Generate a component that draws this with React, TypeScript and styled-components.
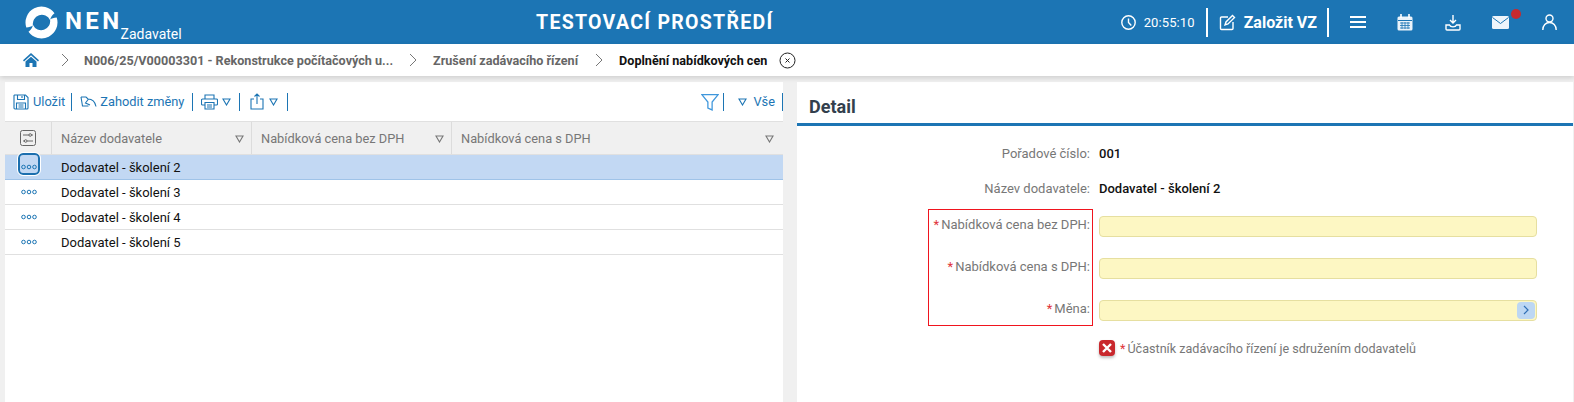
import React from "react";
import styled, { createGlobalStyle } from "styled-components";

const Global = createGlobalStyle`
  html, body { margin: 0; padding: 0; background: #f0f0f0; height: 100%; overflow: hidden; }
  body { font-family: Roboto, "Liberation Sans", sans-serif; }
  * { box-sizing: border-box; }
`;

const Page = styled.div`
  width: 1574px;
  height: 402px;
  display: flex;
  flex-direction: column;
  overflow: hidden;
  background: #f0f0f0;
`;

const Header = styled.header`
  height: 44px;
  flex: none;
  background: #1c75b4;
  color: #fff;
  display: flex;
  align-items: center;
  padding-left: 25px;
`;
const LogoBlock = styled.div`
  width: 511px;
  flex: none;
  display: flex;
  align-items: center;
  height: 44px;
`;
const NenText = styled.span`
  font-size: 24px;
  font-weight: 700;
  letter-spacing: 3.4px;
  margin-left: 7px;
  line-height: 24px;
  margin-top: -3px;
`;
const RoleText = styled.span`
  font-size: 14px;
  align-self: flex-end;
  line-height: 17px;
  margin: 0 0 1px -2px;
`;
const EnvTitle = styled.h1`
  margin: 0;
  width: 239px;
  flex: none;
  font-size: 19.5px;
  font-weight: 700;
  letter-spacing: 1.3px;
  white-space: nowrap;
`;
const HeaderRight = styled.div`
  margin-left: auto;
  display: flex;
  align-items: center;
  height: 44px;
  padding-right: 17px;
`;
const Clock = styled.span`
  font-size: 13px;
  margin: 0 11px 0 8px;
  letter-spacing: 0.1px;
`;
const HeaderDivider = styled.span`
  width: 2px;
  height: 29px;
  background: #fff;
`;
const CreateBtn = styled.span`
  display: flex;
  align-items: center;
  gap: 8px;
  font-size: 16px;
  font-weight: 700;
  padding: 0 10px 0 11px;
`;
const IconSlot = styled.span<{ $w: number; $ml: number }>`
  width: ${(p) => p.$w}px;
  margin-left: ${(p) => p.$ml}px;
  display: flex;
  position: relative;
  justify-content: center;
`;
const Dot = styled.span`
  position: absolute;
  width: 10px;
  height: 10px;
  border-radius: 50%;
  background: #c62a2f;
  right: -12px;
  top: -7px;
`;

const Crumbs = styled.nav`
  height: 32px;
  flex: none;
  background: #fff;
  display: flex;
  align-items: center;
  padding-left: 23px;
  box-shadow: 0 2px 5px rgba(0, 0, 0, 0.14);
  position: relative;
  z-index: 1;
  font-size: 12.6px;
  font-weight: 700;
`;
const Crumb = styled.span<{ $current?: boolean }>`
  color: ${(p) => (p.$current ? "#111" : "#666")};
  white-space: nowrap;
`;
const ChevronSlot = styled.span<{ $ml: number; $mr: number }>`
  margin: 0 ${(p) => p.$mr}px 0 ${(p) => p.$ml}px;
  display: flex;
`;

const Body = styled.main`
  flex: 1;
  display: flex;
  padding: 6px 1px 0 5px;
  gap: 14px;
  min-height: 0;
`;
const ListPanel = styled.section`
  width: 778px;
  flex: none;
  background: #fff;
`;
const DetailPanel = styled.section`
  flex: 1;
  background: #fff;
`;

const Toolbar = styled.div`
  height: 40px;
  display: flex;
  align-items: center;
  border-bottom: 1px solid #e0e0e0;
  padding-left: 8px;
  color: #1c75b4;
  font-size: 12.8px;
`;
const ToolDivider = styled.span<{ $ml?: number; $mr?: number }>`
  width: 1px;
  height: 18px;
  background: #1c75b4;
  margin: 0 ${(p) => p.$mr ?? 8}px 0 ${(p) => p.$ml ?? 7}px;
`;
const ToolButton = styled.span<{ $gap?: number }>`
  display: flex;
  align-items: center;
  gap: ${(p) => p.$gap ?? 4}px;
  white-space: nowrap;
`;
const ToolRight = styled.div`
  margin-left: auto;
  display: flex;
  align-items: center;
  height: 100%;
`;
const AllLabel = styled.span`
  margin: 0 7px 0 6px;
`;

const GridHead = styled.div`
  display: grid;
  grid-template-columns: 47px 200px 200px 1fr;
  height: 33px;
  background: #f0f0f0;
  border-bottom: 1px solid #e0e0e0;
  color: #777;
  font-size: 12.8px;
`;
const HeadCell = styled.div`
  display: flex;
  align-items: center;
  justify-content: space-between;
  padding: 1px 7px 0 9px;
  border-right: 1px solid #dcdcdc;
  &:last-child { border-right: none; padding-right: 9px; }
`;
const SettingsCell = styled(HeadCell)`
  justify-content: center;
  padding: 0;
`;
const Row = styled.div<{ $selected?: boolean }>`
  display: grid;
  grid-template-columns: 47px 1fr;
  height: 25px;
  align-items: center;
  font-size: 13px;
  color: #111;
  background: ${(p) => (p.$selected ? "#c2d8f3" : "#fff")};
  border-bottom: 1px solid ${(p) => (p.$selected ? "#9fc3e8" : "#e0e0e0")};
`;
const RowAction = styled.div`
  display: flex;
  justify-content: center;
  position: relative;
`;
const RowName = styled.div`
  padding: 1px 0 0 9px;
`;
const Focus = styled.span`
  position: absolute;
  top: -11px;
  left: 13px;
  width: 22px;
  height: 22px;
  border: 2px solid #1c6fae;
  border-radius: 5px;
  outline: 1px solid #fff;
`;

const DetailTitleBar = styled.div`
  height: 44px;
  border-bottom: 3px solid #1c75b4;
  padding: 14px 0 0 12px;
  font-size: 18px;
  line-height: 21px;
  font-weight: 700;
  color: #333f4d;
`;
const Form = styled.div`
  position: relative;
  display: grid;
  grid-template-columns: 294px 438px;
  column-gap: 8px;
  padding: 9px 0 0 0;
  font-size: 13px;
  color: #777;
`;
const Label = styled.div<{ $h: number }>`
  height: ${(p) => p.$h}px;
  display: flex;
  align-items: center;
  justify-content: flex-end;
  white-space: nowrap;
  padding: ${(p) => (p.$h === 42 ? "0 1px 3px 0" : "2px 1px 0 0")};
`;
const Star = styled.span`
  color: #e0343a;
  margin-right: 2px;
`;
const Value = styled.div<{ $h: number }>`
  height: ${(p) => p.$h}px;
  padding-top: 2px;
  display: flex;
  align-items: center;
  color: #111;
  font-weight: 500;
`;
const Field = styled.div`
  height: 42px;
  display: flex;
  align-items: center;
`;
const Input = styled.div`
  width: 100%;
  height: 21px;
  background: #fdf7c3;
  border: 1px solid #e6dfa0;
  border-radius: 4px;
  position: relative;
`;
const PickButton = styled.span`
  position: absolute;
  right: 1px;
  top: 1px;
  width: 18px;
  height: 17px;
  border-radius: 4px;
  background: #bdd7f3;
  display: flex;
  align-items: center;
  justify-content: center;
`;
const RedBox = styled.div`
  position: absolute;
  left: 131px;
  top: 83px;
  width: 165px;
  height: 117px;
  border: 1px solid #f0141e;
`;
const CheckRow = styled.div`
  grid-column: 2;
  display: flex;
  align-items: center;
  height: 34px;
  font-size: 12.6px;
  color: #777;
`;
const CheckBox = styled.span`
  width: 16px;
  height: 16px;
  border-radius: 4px;
  background: #c9282d;
  box-shadow: 0 2px 3px rgba(0, 0, 0, 0.25);
  display: flex;
  align-items: center;
  justify-content: center;
  margin-right: 5px;
`;

const stroke = { fill: "none", stroke: "currentColor", strokeWidth: 1.1 } as const;

const crescent =
  "M1.300 21.500A16 16 0 0 1 29.500 7.200C27.500 8.500 25.800 11 25 14A9 9 0 0 0 8 19.500C6.500 20.500 4 21.200 1.300 21.500Z";
const Logo = () => (
  <svg width="33" height="33" viewBox="0 0 33 33" fill="#fff">
    <path d={crescent} />
    <path d={crescent} transform="rotate(180 16.5 16.5)" />
  </svg>
);
const HIcon = ({ w, h, children }: { w: number; h: number; children: React.ReactNode }) => (
  <svg width={w} height={h} viewBox={`0 0 ${w} ${h}`} fill="none" stroke="#fff" strokeWidth="1.4">
    {children}
  </svg>
);
const Chevron = () => (
  <svg width="8" height="14" viewBox="0 0 8 14" fill="none" stroke="#777" strokeWidth="1">
    <path d="M1 1l6 6-6 6" />
  </svg>
);
const Tri = ({ color = "#1c75b4" }: { color?: string }) => (
  <svg width="9" height="8" viewBox="0 0 9 8" fill="none" stroke={color} strokeWidth="1.1">
    <path d="M1 1h7L4.500 7z" />
  </svg>
);
const Dots = () => (
  <svg width="16" height="6" viewBox="0 0 16 6" fill="none" stroke="#1c75b4" strokeWidth="1">
    <circle cx="2.500" cy="3" r="1.800" />
    <circle cx="8" cy="3" r="1.800" />
    <circle cx="13.500" cy="3" r="1.800" />
  </svg>
);

const names = ["Dodavatel - školení 2", "Dodavatel - školení 3", "Dodavatel - školení 4", "Dodavatel - školení 5"];

export default function App() {
  return (
    <Page>
      <Global />
      <Header>
        <LogoBlock>
          <Logo />
          <NenText>NEN</NenText>
          <RoleText>Zadavatel</RoleText>
        </LogoBlock>
        <EnvTitle>TESTOVACÍ PROSTŘEDÍ</EnvTitle>
        <HeaderRight>
          <HIcon w={15} h={15}>
            <circle cx="7.500" cy="7.500" r="6.700" />
            <path d="M7.500 3.500V7.500l2.800 3" />
          </HIcon>
          <Clock>20:55:10</Clock>
          <HeaderDivider />
          <CreateBtn>
            <HIcon w={17} h={17}>
              <path d="M9 3H2.500a1 1 0 0 0-1 1v10.500a1 1 0 0 0 1 1H13a1 1 0 0 0 1-1V8" />
              <path d="M6 11l1-3 6.500-6.500 2 2L9 10z" />
            </HIcon>
            Založit VZ
          </CreateBtn>
          <HeaderDivider />
          <IconSlot $w={17} $ml={20}>
            <HIcon w={16} h={14}>
              <path d="M0 2h16M0 7h16M0 12h16" strokeWidth="2" />
            </HIcon>
          </IconSlot>
          <IconSlot $w={16} $ml={31}>
            <svg width="16" height="17" viewBox="0 0 16 17">
              <rect x=".5" y="2.500" width="15" height="14" rx="1.500" fill="#eaf3fa" />
              <path d="M4 0v4M12 0v4" stroke="#fff" strokeWidth="1.600" />
              <path d="M1 6.500h14" stroke="#1c75b4" />
              <path d="M3 9h10M3 11.500h10M3 14h10M5 8v7M8 8v7M11 8v7" stroke="#1c75b4" strokeWidth=".8" />
            </svg>
          </IconSlot>
          <IconSlot $w={16} $ml={32}>
            <HIcon w={16} h={17}>
              <path d="M8 1v8M5 6l3 3 3-3" />
              <path d="M1 11h3.500c1 2.500 6 2.500 7 0H15v4a1 1 0 0 1-1 1H2a1 1 0 0 1-1-1z" />
            </HIcon>
          </IconSlot>
          <IconSlot $w={17} $ml={31}>
            <svg width="17" height="13" viewBox="0 0 17 13">
              <rect width="17" height="13" rx="1.500" fill="#eef5fb" />
              <path d="M.5 1.500l8 6 8-6" fill="none" stroke="#1c75b4" strokeWidth="1" />
            </svg>
            <Dot />
          </IconSlot>
          <IconSlot $w={15} $ml={33}>
            <HIcon w={15} h={16}>
              <circle cx="7.500" cy="4.500" r="3.500" />
              <path d="M.8 16c0-4.500 3-7.500 6.700-7.500s6.700 3 6.700 7.500" />
            </HIcon>
          </IconSlot>
        </HeaderRight>
      </Header>

      <Crumbs>
        <svg width="16" height="16" viewBox="0 0 16 16">
          <path d="M8 1L0 8.200l1 1.200L8 3.200l7 6.200 1-1.200z" fill="#1c75b4" />
          <path d="M2.500 9.500L8 4.700l5.500 4.800V15H9.500v-4h-3v4h-4z" fill="#1c75b4" />
        </svg>
        <ChevronSlot $ml={22} $mr={15}><Chevron /></ChevronSlot>
        <Crumb>N006/25/V00003301 - Rekonstrukce počítačových u...</Crumb>
        <ChevronSlot $ml={16} $mr={16}><Chevron /></ChevronSlot>
        <Crumb>Zrušení zadávacího řízení</Crumb>
        <ChevronSlot $ml={17} $mr={16}><Chevron /></ChevronSlot>
        <Crumb $current>Doplnění nabídkových cen</Crumb>
        <ChevronSlot $ml={12} $mr={0}>
          <svg width="17" height="17" viewBox="0 0 17 17" fill="none" stroke="#222" strokeWidth="1">
            <circle cx="8.500" cy="8.500" r="7.500" />
            <path d="M6.500 6.500l4 4M10.500 6.500l-4 4" />
          </svg>
        </ChevronSlot>
      </Crumbs>

      <Body>
        <ListPanel>
          <Toolbar>
            <ToolButton>
              <svg width="16" height="16" viewBox="0 0 16 16" {...stroke}>
                <path d="M1.500 1h11l2.500 2.500V14a1 1 0 0 1-1 1H2a1 1 0 0 1-1-1V1.500z" />
                <path d="M4.500 1v4.500h7V1M9 2v2M3.500 15V9h9v6M5.500 11h5M5.500 13h5" />
              </svg>
              Uložit
            </ToolButton>
            <ToolDivider $ml={6} />
            <ToolButton $gap={3}>
              <svg width="17" height="13" viewBox="0 0 17 13" {...stroke}>
                <path d="M1 2l1.500 9h6M1 2h5l2 2c4 0 7 2.500 8 7.500M8.500 4L5.500 8l4.500 2" />
              </svg>
              Zahodit změny
            </ToolButton>
            <ToolDivider $ml={8} />
            <ToolButton>
              <svg width="17" height="16" viewBox="0 0 17 16" {...stroke}>
                <path d="M4 5V1h9v4M4 11H1.500A1 1 0 0 1 .5 10V6a1 1 0 0 1 1-1h14a1 1 0 0 1 1 1v4a1 1 0 0 1-1 1H13" />
                <path d="M4 8.500h9V15H4zM6 11h5M6 13h5" />
              </svg>
              <Tri />
            </ToolButton>
            <ToolDivider $ml={8} $mr={10} />
            <ToolButton $gap={5}>
              <svg width="14" height="17" viewBox="0 0 14 17" {...stroke}>
                <path d="M4 6H1v10h12V6h-3M7 11V1M4.500 3.500L7 1l2.500 2.500" />
              </svg>
              <Tri />
            </ToolButton>
            <ToolDivider $ml={9} $mr={0} />
            <ToolRight>
              <svg width="18" height="18" viewBox="0 0 17 17" fill="none" stroke="#3f97dc" strokeWidth="1.200">
                <path d="M.8 1.500h15.400L10.500 8.500v7.500l-4-1.800V8.500z" />
              </svg>
              <ToolDivider $ml={4} $mr={14} />
              <Tri />
              <AllLabel>Vše</AllLabel>
              <ToolDivider $ml={0} $mr={0} />
            </ToolRight>
          </Toolbar>
          <GridHead>
            <SettingsCell>
              <svg width="16" height="16" viewBox="0 0 16 16" fill="none" stroke="#666" strokeWidth="1">
                <rect x=".5" y=".5" width="15" height="15" rx="2" />
                <path d="M3 5h6M11.500 5H13M3 11h1.500M7 11h6" />
                <circle cx="10.200" cy="5" r="1.300" />
                <circle cx="5.700" cy="11" r="1.300" />
              </svg>
            </SettingsCell>
            <HeadCell>Název dodavatele<Tri color="#777" /></HeadCell>
            <HeadCell>Nabídková cena bez DPH<Tri color="#777" /></HeadCell>
            <HeadCell>Nabídková cena s DPH<Tri color="#777" /></HeadCell>
          </GridHead>
          {names.map((n, i) => (
            <Row key={n} $selected={i === 0}>
              <RowAction>
                {i === 0 && <Focus />}
                <Dots />
              </RowAction>
              <RowName>{n}</RowName>
            </Row>
          ))}
        </ListPanel>
        <DetailPanel>
          <DetailTitleBar>Detail</DetailTitleBar>
          <Form>
            <Label $h={35}>Pořadové číslo:</Label>
            <Value $h={35}>001</Value>
            <Label $h={35}>Název dodavatele:</Label>
            <Value $h={35}>Dodavatel - školení 2</Value>
            <Label $h={42}><Star>*</Star>Nabídková cena bez DPH:</Label>
            <Field><Input /></Field>
            <Label $h={42}><Star>*</Star>Nabídková cena s DPH:</Label>
            <Field><Input /></Field>
            <Label $h={42}><Star>*</Star>Měna:</Label>
            <Field>
              <Input>
                <PickButton>
                  <svg width="6" height="10" viewBox="0 0 6 10" fill="none" stroke="#2f6fb5" strokeWidth="1.200">
                    <path d="M1 1l4 4-4 4" />
                  </svg>
                </PickButton>
              </Input>
            </Field>
            <CheckRow>
              <CheckBox>
                <svg width="10" height="10" viewBox="0 0 10 10" fill="none" stroke="#fff" strokeWidth="2.400">
                  <path d="M1 1l8 8M9 1l-8 8" />
                </svg>
              </CheckBox>
              <Star>*</Star>Účastník zadávacího řízení je sdružením dodavatelů
            </CheckRow>
            <RedBox />
          </Form>
        </DetailPanel>
      </Body>
    </Page>
  );
}
